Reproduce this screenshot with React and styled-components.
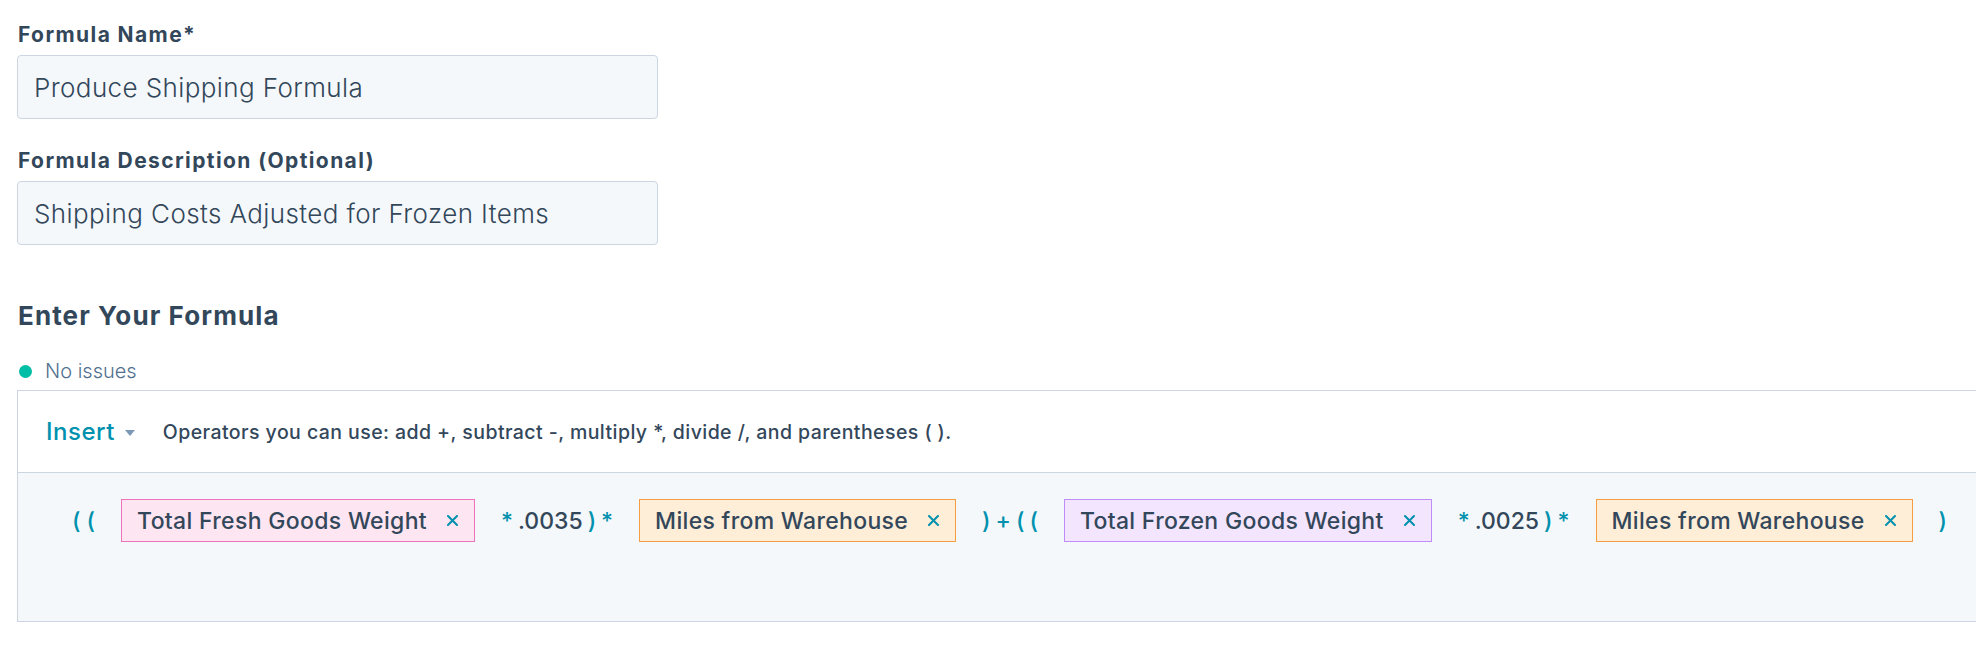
import React from "react";
import styled, { createGlobalStyle } from "styled-components";

const Global = createGlobalStyle`
  html, body { margin: 0; padding: 0; background: #ffffff; overflow: hidden; }
  body { font-family: Inter, "Noto Sans", sans-serif; color: #33475b; }
  * { box-sizing: border-box; }
`;

const Page = styled.div`
  padding: 23px 0 0 17px;
  display: flex;
  flex-direction: column;
`;

const Label = styled.label`
  display: block;
  font-size: 21px;
  line-height: 24px;
  font-weight: 700;
  letter-spacing: 1.4px;
  color: #33475b;
  margin-top: ${(p) => p.$top || 0}px;
  padding-left: 1px;
`;

const TextInput = styled.div`
  width: 641px;
  height: 64px;
  margin-top: 8px;
  background: #f5f8fa;
  border: 1px solid #cbd6e2;
  border-radius: 4px;
  display: flex;
  align-items: center;
  padding: 0 16px;
  font-size: 26px;
  font-weight: 300;
  letter-spacing: 0.4px;
  color: #33475b;
`;

const Heading = styled.h2`
  margin: 55px 0 0;
  font-size: 26px;
  line-height: 32px;
  font-weight: 700;
  letter-spacing: 1.1px;
  color: #33475b;
  padding-left: 1px;
`;

const Status = styled.div`
  margin-top: 27px;
  display: flex;
  align-items: center;
  gap: 13px;
  font-size: 20px;
  line-height: 24px;
  font-weight: 300;
  color: #516f90;
  padding-left: 1px;
`;

const Dot = styled.span`
  width: 13px;
  height: 13px;
  border-radius: 50%;
  background: #00bda5;
  margin-left: 1px;
`;

const FormulaBox = styled.div`
  margin-top: 7px;
  width: 2000px;
  border: 1px solid #cbd6e2;
  display: flex;
  flex-direction: column;
`;

const Toolbar = styled.div`
  height: 82px;
  display: flex;
  align-items: center;
  padding-left: 28px;
  background: #ffffff;
  border-bottom: 1px solid #cbd6e2;
`;

const InsertButton = styled.button`
  display: flex;
  align-items: center;
  gap: 10px;
  background: none;
  border: none;
  padding: 0;
  font-family: inherit;
  font-size: 24px;
  font-weight: 500;
  letter-spacing: 0.5px;
  color: #0091ae;
  cursor: pointer;
`;

const Caret = styled.span`
  width: 0;
  height: 0;
  border-left: 5.5px solid transparent;
  border-right: 5.5px solid transparent;
  border-top: 6px solid #7c98b6;
  margin-top: 2px;
`;

const Hint = styled.span`
  margin-left: 28px;
  font-size: 19.5px;
  font-weight: 500;
  letter-spacing: 0.43px;
  color: #33475b;
`;

const Editor = styled.div`
  height: 148px;
  background: #f5f8fa;
  padding: 26px 0 0 54px;
  display: flex;
  align-items: flex-start;
  gap: 26px;
`;

const Ops = styled.span`
  height: 43px;
  display: flex;
  align-items: center;
  gap: 5px;
  font-size: 23px;
  font-weight: 500;
  white-space: pre;
`;

const Op = styled.span`
  color: ${(p) => (p.$num ? "#33475b" : "#0091ae")};
`;

const chipColors = {
  pink: { bg: "#fde5f1", border: "#ef72bd" },
  orange: { bg: "#feedd7", border: "#f59d43" },
  purple: { bg: "#f3e5fd", border: "#c08cf7" },
};

const Chip = styled.span`
  height: 43px;
  display: flex;
  align-items: center;
  padding: 0 16px 0 15px;
  background: ${(p) => chipColors[p.$tone].bg};
  border: 1px solid ${(p) => chipColors[p.$tone].border};
  font-size: 23px;
  font-weight: 500;
  letter-spacing: 0.32px;
  color: #33475b;
  white-space: nowrap;
`;

const Remove = styled.span`
  display: flex;
  margin-left: 20px;
`;

const X = () => (
  <Remove>
    <svg width="11" height="11" viewBox="0 0 11 11">
      <path d="M1 1 L10 10 M10 1 L1 10" stroke="#0091ae" strokeWidth="2" strokeLinecap="round" />
    </svg>
  </Remove>
);

const tokens = [
  { t: "ops", parts: [["( (", false]] },
  { t: "chip", tone: "pink", text: "Total Fresh Goods Weight" },
  { t: "ops", parts: [["*", false], [".0035", true], [")", false], ["*", false]] },
  { t: "chip", tone: "orange", text: "Miles from Warehouse" },
  { t: "ops", parts: [[")", false], ["+", false], ["(", false], ["(", false]] },
  { t: "chip", tone: "purple", text: "Total Frozen Goods Weight" },
  { t: "ops", parts: [["*", false], [".0025", true], [")", false], ["*", false]] },
  { t: "chip", tone: "orange", text: "Miles from Warehouse" },
  { t: "ops", parts: [[")", false]] },
];

export default function App() {
  return (
    <>
      <Global />
      <Page>
        <Label>Formula Name*</Label>
        <TextInput>Produce Shipping Formula</TextInput>
        <Label $top={30}>Formula Description (Optional)</Label>
        <TextInput>Shipping Costs Adjusted for Frozen Items</TextInput>
        <Heading>Enter Your Formula</Heading>
        <Status>
          <Dot />
          No issues
        </Status>
        <FormulaBox>
          <Toolbar>
            <InsertButton>
              Insert
              <Caret />
            </InsertButton>
            <Hint>
              Operators you can use: add +, subtract -, multiply *, divide /, and parentheses ( ).
            </Hint>
          </Toolbar>
          <Editor>
            {tokens.map((tk, i) =>
              tk.t === "chip" ? (
                <Chip key={i} $tone={tk.tone}>
                  {tk.text}
                  <X />
                </Chip>
              ) : (
                <Ops key={i}>
                  {tk.parts.map(([s, num], j) => (
                    <Op key={j} $num={num}>
                      {s}
                    </Op>
                  ))}
                </Ops>
              )
            )}
          </Editor>
        </FormulaBox>
      </Page>
    </>
  );
}
